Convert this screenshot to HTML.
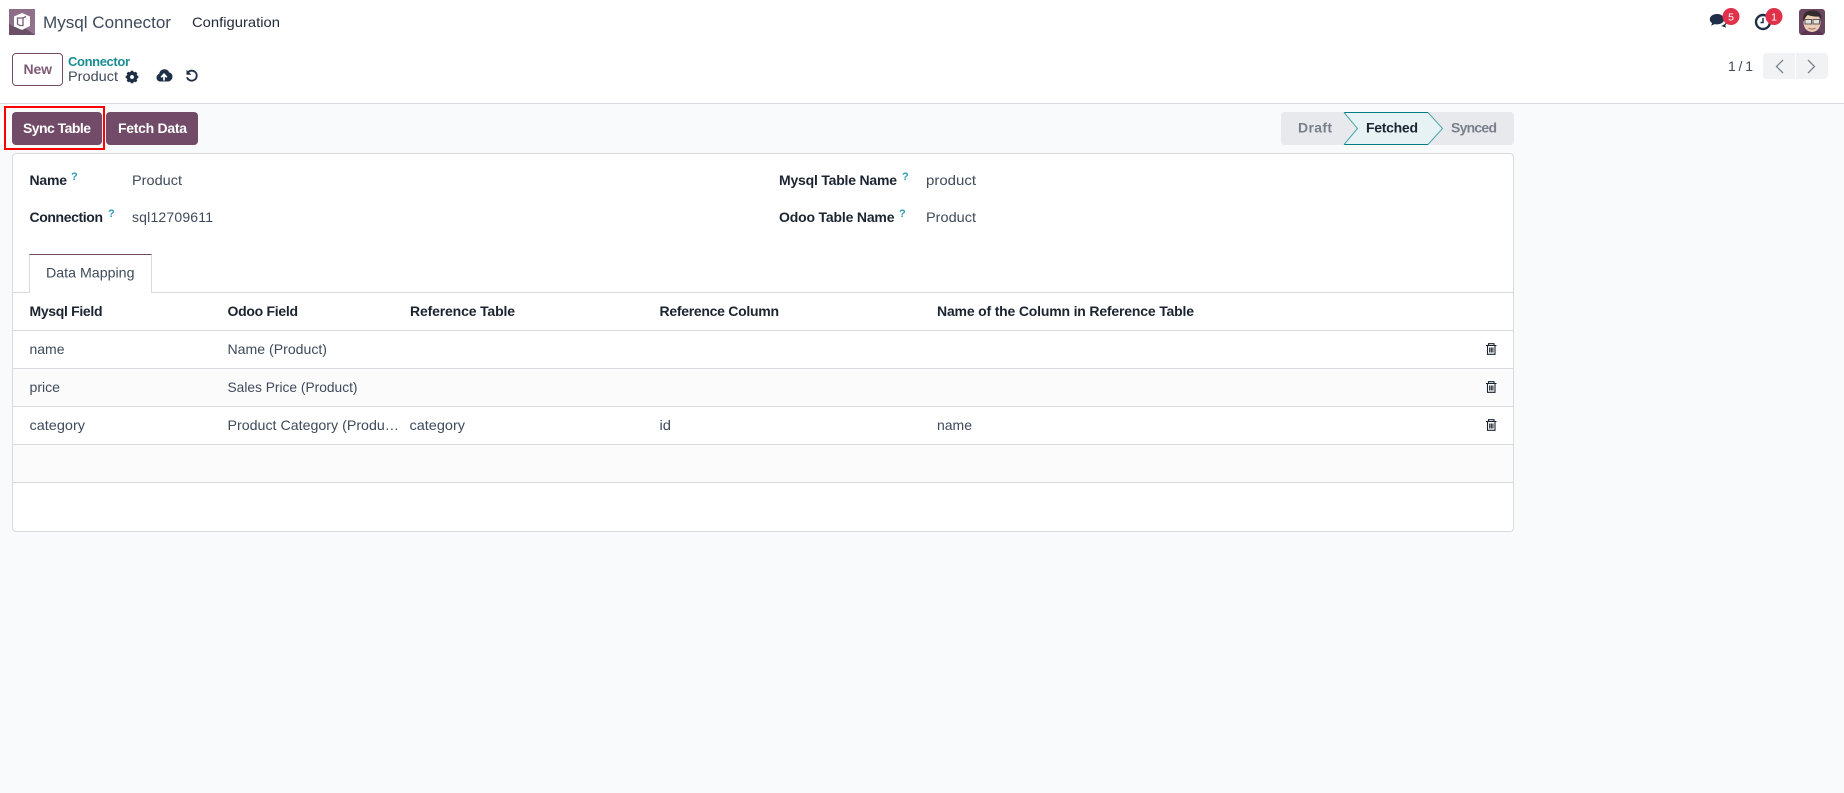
<!DOCTYPE html>
<html lang="en"><head><meta charset="utf-8"><title>Mysql Connector</title>
<style>
html,body{margin:0;padding:0;width:1844px;height:793px;overflow:hidden;background:#f9fafb;font-family:"Liberation Sans",sans-serif}
.b{position:absolute;box-sizing:border-box}
svg{position:absolute;left:0;top:0}
text{font-family:"Liberation Sans",sans-serif;font-size:14px;fill:#3f4a5a}
.h{font-weight:700;fill:#1b2430}
.w{font-weight:700;fill:#fff}
.q{font-size:11px;font-weight:700;fill:#2a9bb8}
</style></head><body>
<div class="b" style="left:0;top:0;width:1844px;height:104px;background:#fff;border-bottom:1px solid #d8dadd"></div>
<div class="b" style="left:12px;top:53px;width:51px;height:33px;border:1px solid #714b67;border-radius:4px;background:#fff"></div>
<div class="b" style="left:4px;top:106px;width:101px;height:44px;border:2px solid #f00"></div>
<div class="b" style="left:12px;top:112px;width:90px;height:33px;background:#714b67;border-radius:4px"></div>
<div class="b" style="left:106px;top:112px;width:92px;height:33px;background:#714b67;border-radius:4px"></div>
<div class="b" style="left:1281px;top:112px;width:233px;height:33px;background:#e7e9ed;border-radius:4px"></div>
<div class="b" style="left:12px;top:153px;width:1502px;height:379px;background:#fff;border:1px solid #d8dadd;border-radius:4px"></div>
<div class="b" style="left:13px;top:369px;width:1500px;height:37px;background:#fbfbfc"></div>
<div class="b" style="left:13px;top:445px;width:1500px;height:37px;background:#fbfbfc"></div>
<div class="b" style="left:13px;top:292px;width:1500px;height:1px;background:#d8dadd"></div>
<div class="b" style="left:13px;top:330px;width:1500px;height:1px;background:#d8dadd"></div>
<div class="b" style="left:13px;top:368px;width:1500px;height:1px;background:#d8dadd"></div>
<div class="b" style="left:13px;top:406px;width:1500px;height:1px;background:#d8dadd"></div>
<div class="b" style="left:13px;top:444px;width:1500px;height:1px;background:#d8dadd"></div>
<div class="b" style="left:13px;top:482px;width:1500px;height:1px;background:#d8dadd"></div>
<div class="b" style="left:29px;top:254px;width:123px;height:39px;background:#fff;border:1px solid #d8dadd;border-top:1px solid #714b67;border-bottom:0"></div>
<div class="b" style="left:1763px;top:53px;width:32px;height:26px;background:#f1f2f4;border-radius:4px 0 0 4px"></div>
<div class="b" style="left:1796px;top:53px;width:32px;height:26px;background:#f1f2f4;border-radius:0 4px 4px 0"></div>

<svg width="1844" height="793" viewBox="0 0 1844 793">
<defs><linearGradient id="lg" x1="0" y1="0" x2="1" y2="1"><stop offset="0" stop-color="#8b6a86"/><stop offset="1" stop-color="#94758f"/></linearGradient></defs>
<!-- logo -->
<rect x="9" y="9" width="26" height="26" fill="url(#lg)"/>
<path d="M9 35V24l5 3 8-1 13 9z" fill="#5d4559" opacity=".75"/>
<path d="M22 13l8 3.5v9.5l-8 4-8-3.500v-10z" fill="#fff"/>
<path d="M17.500 18h5.500v7.500h-3.200l-2.300-1.500zM23 18l3-1.500" fill="none" stroke="#7c5d78" stroke-width="1.300"/>
<text x="43" y="28" textLength="128" lengthAdjust="spacingAndGlyphs" style="font-size:17px">Mysql Connector</text>
<text x="192" y="27" textLength="88" lengthAdjust="spacingAndGlyphs" style="fill:#1f2937">Configuration</text>

<!-- systray -->
<path d="M1717 14c-4 0-7.200 2.300-7.200 5.300 0 1.700.9 3 2.300 3.900l-1 2.500 3.500-1.600c.8.200 1.600.3 2.400.3 4 0 7.200-2.300 7.200-5.100s-3.200-5.300-6.700-5.300z" fill="#1f2f47"/>
<path d="M1726.500 20c.3 2.500-2.500 5-5.500 6l1.500.4 3.500 1.300-.7-2.600c1.500-1 2.200-3 1.200-5.100z" fill="#1f2f47"/>
<circle cx="1731" cy="16.500" r="8.500" fill="#e0314b"/>
<text x="1731" y="20.300" text-anchor="middle" style="font-size:10.500px;font-weight:400;fill:#fff">5</text>
<circle cx="1763" cy="22" r="7" fill="none" stroke="#1f2f47" stroke-width="2.400"/>
<path d="M1763 18v4.500h-2.500" fill="none" stroke="#1f2f47" stroke-width="1.500"/>
<circle cx="1774" cy="16.500" r="8.500" fill="#e0314b"/>
<text x="1774" y="20.300" text-anchor="middle" style="font-size:10.500px;font-weight:400;fill:#fff">1</text>
<!-- avatar -->
<clipPath id="av"><rect x="1799" y="9" width="26" height="26" rx="3"/></clipPath>
<g clip-path="url(#av)">
<rect x="1799" y="9" width="26" height="26" fill="#6a4560"/>
<path d="M1801 35c1-4 5-5 11-5s10 1 11 5z" fill="#5a3550"/>
<ellipse cx="1812" cy="22.500" rx="8.500" ry="9.500" fill="#eccdb5"/>
<path d="M1803.500 21c-1.500-7 2.500-10.500 8.500-10.500 6 0 9.800 2 9.500 9.500l-1.800-3.500c-4.500.5-9-.5-12-1.500-2 1.500-2.700 3.500-3.700 6z" fill="#332a2b"/>
<rect x="1805" y="19.500" width="6.500" height="4.500" fill="#e4e0da" stroke="#5d5a5c" stroke-width="1"/>
<rect x="1813" y="19.500" width="6.500" height="4.500" fill="#e4e0da" stroke="#5d5a5c" stroke-width="1"/>
<path d="M1808.500 28c2 1.500 5 1.500 7 0" fill="none" stroke="#9a6a58" stroke-width="1"/>
</g>

<!-- control panel -->
<text x="23.500" y="74" textLength="28.500" style="font-weight:700;fill:#7d5a75">New</text>
<text x="68" y="66" textLength="62" style="font-size:13px;font-weight:700;fill:#1a8c92">Connector</text>
<text x="68" y="81" textLength="50" lengthAdjust="spacingAndGlyphs">Product</text>
<!-- gear -->
<g transform="translate(132 77)" fill="#1f2f47">
<circle r="3.700" fill="none" stroke="#1f2f47" stroke-width="3.400"/>
<g stroke="#1f2f47" stroke-width="2.600"><path d="M0-6.300V-4M0 6.300V4M-6.300 0H-4M6.300 0H4M-4.500-4.500l1.700 1.700M4.500 4.500L2.800 2.800M-4.500 4.500l1.700-1.700M4.500-4.500L2.800-2.800"/></g>
</g>
<!-- cloud upload -->
<path d="M160.500 81.500c-2.300 0-4-1.700-4-3.900 0-1.800 1.100-3.200 2.700-3.700.3-2.700 2.500-4.600 5.200-4.600 2.200 0 4.100 1.300 4.900 3.200 1.900.4 3.200 2 3.200 4 0 2.400-1.900 5-4.300 5z" fill="#1f2f47"/>
<path d="M164 80.500v-5.500m-2.800 2.300l2.800-3 2.800 3" fill="none" stroke="#fff" stroke-width="1.700"/>
<!-- undo -->
<path d="M187.500 73a5 5 0 1 1-.5 4.300" fill="none" stroke="#1f2f47" stroke-width="1.800"/>
<path d="M186.500 69.800v4.900h4.900z" fill="#1f2f47"/>

<!-- pager -->
<text x="1728" y="71" textLength="25" style="fill:#3f4a5a">1 / 1</text>
<path d="M1783 60l-6.500 6.500 6.500 6.500" fill="none" stroke="#7b828d" stroke-width="1.300"/>
<path d="M1808 60l6.500 6.500-6.500 6.500" fill="none" stroke="#7b828d" stroke-width="1.300"/>

<!-- buttons -->
<text x="23" y="133" textLength="68" class="w">Sync Table</text>
<text x="118" y="133" textLength="69" class="w">Fetch Data</text>

<!-- statusbar -->
<path d="M1344 112.500h84l14.500 16-14.500 16h-84l13.500-16z" fill="#e6f2f3"/>
<path d="M1344 112.500h84M1344 144.500h84" fill="none" stroke="#017e84" stroke-width="1"/>
<path d="M1428 112.500l14.500 16-14.500 16M1344 112.500l13.500 16-13.500 16" fill="none" stroke="#4da5a9" stroke-width="1"/>
<text x="1298" y="132.500" textLength="34" style="font-weight:700;fill:#7a808b">Draft</text>
<text x="1366" y="132.500" textLength="52" class="h">Fetched</text>
<text x="1451" y="132.500" textLength="46" style="font-weight:700;fill:#7a808b">Synced</text>

<!-- form -->
<text x="29.500" y="185" textLength="37.500" class="h">Name</text>
<text x="71" y="180" class="q">?</text>
<text x="132" y="185" textLength="50" lengthAdjust="spacingAndGlyphs">Product</text>
<text x="29.500" y="222" textLength="73.500" class="h">Connection</text>
<text x="108" y="217" class="q">?</text>
<text x="132" y="222" textLength="81">sql12709611</text>
<text x="779" y="185" textLength="118" class="h">Mysql Table Name</text>
<text x="902" y="180" class="q">?</text>
<text x="926" y="185" textLength="50" lengthAdjust="spacingAndGlyphs">product</text>
<text x="779" y="222" textLength="115.500" class="h">Odoo Table Name</text>
<text x="899" y="217" class="q">?</text>
<text x="926" y="222" textLength="50" lengthAdjust="spacingAndGlyphs">Product</text>
<text x="46" y="277.500" textLength="88.500" lengthAdjust="spacingAndGlyphs">Data Mapping</text>

<!-- table head -->
<text x="29.500" y="316" textLength="73" class="h">Mysql Field</text>
<text x="227.500" y="316" textLength="70.500" class="h">Odoo Field</text>
<text x="410" y="316" textLength="105" class="h">Reference Table</text>
<text x="659.500" y="316" textLength="119.500" class="h">Reference Column</text>
<text x="937" y="316" textLength="257" class="h">Name of the Column in Reference Table</text>

<!-- rows -->
<text x="29.500" y="354" textLength="35" lengthAdjust="spacingAndGlyphs">name</text>
<text x="227.500" y="354" textLength="99.500" lengthAdjust="spacingAndGlyphs">Name (Product)</text>
<text x="29.500" y="392" textLength="30.500" lengthAdjust="spacingAndGlyphs">price</text>
<text x="227.500" y="392" textLength="130" lengthAdjust="spacingAndGlyphs">Sales Price (Product)</text>
<text x="29.500" y="430" textLength="55.500" lengthAdjust="spacingAndGlyphs">category</text>
<text x="227.500" y="430" textLength="171.500" lengthAdjust="spacingAndGlyphs">Product Category (Produ…</text>
<text x="409.500" y="430" textLength="55.500" lengthAdjust="spacingAndGlyphs">category</text>
<text x="659.500" y="430" textLength="11.500" lengthAdjust="spacingAndGlyphs">id</text>
<text x="937" y="430" textLength="35" lengthAdjust="spacingAndGlyphs">name</text>

<!-- trash -->
<g fill="none" stroke="#1b2430" stroke-width="1.100">
<path d="M1486 345.500h10.500M1488.500 345.500v-1.800h5.500v1.800M1487.500 345.500v8.800h7.500v-8.800M1489.700 347.500v5M1491.300 347.500v5M1492.900 347.500v5"/>
<path transform="translate(0 38)" d="M1486 345.500h10.500M1488.500 345.500v-1.800h5.500v1.800M1487.500 345.500v8.800h7.500v-8.800M1489.700 347.500v5M1491.300 347.500v5M1492.900 347.500v5"/>
<path transform="translate(0 76)" d="M1486 345.500h10.500M1488.500 345.500v-1.800h5.500v1.800M1487.500 345.500v8.800h7.500v-8.800M1489.700 347.500v5M1491.300 347.500v5M1492.900 347.500v5"/>
</g>
</svg>
</body></html>
